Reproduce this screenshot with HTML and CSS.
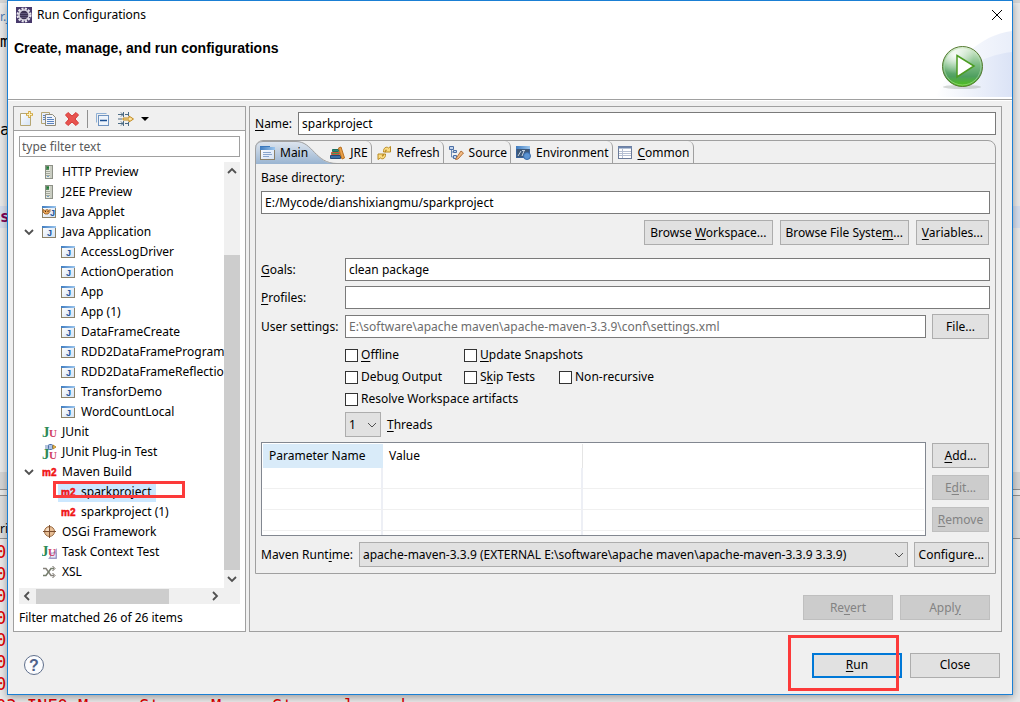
FILE: index.html
```html
<!DOCTYPE html>
<html lang="en">
<head>
	<meta charset="utf-8">
	<title>Run Configurations</title>
	<link rel="stylesheet" href="styles.css">
</head>
<body>

<!-- shared icons -->
<svg class="defs" aria-hidden="true">
	<defs>
		<linearGradient id="g-bar" x1="0" y1="0" x2="1" y2="0"><stop offset="0" stop-color="#3f7cc0"/><stop offset="1" stop-color="#9cc6ee"/></linearGradient>
		<linearGradient id="g-page" x1="0" y1="0" x2="1" y2="1"><stop offset="0" stop-color="#ffffff"/><stop offset="1" stop-color="#d3e2f5"/></linearGradient>
		<linearGradient id="g-tab" x1="0" y1="0" x2="0" y2="1"><stop offset="0" stop-color="#dfe6ef"/><stop offset="1" stop-color="#99b4d1"/></linearGradient>
		<symbol id="i-java" viewBox="0 0 16 16">
			<rect x=".5" y="2.5" width="13" height="11" fill="url(#g-page)" stroke="#8b8168"/>
			<rect x="0" y="2" width="14" height="2" fill="url(#g-bar)"/>
			<text x="5" y="12" class="ico-j">J</text>
		</symbol>
		<symbol id="i-applet" viewBox="0 0 16 16">
			<rect x=".5" y="2.5" width="13" height="11" fill="url(#g-page)" stroke="#8b8168"/>
			<rect x="0" y="2" width="14" height="2" fill="url(#g-bar)"/>
			<path d="M1 5.500l2 1 2-1 2 1 1-1v2l-2 2.500H3L1 8z" fill="#e9a75c" stroke="#94591f" stroke-width=".8"/>
			<path d="M3 7.500h1M5.500 7.500h1" stroke="#4b2b0d"/>
			<text x="8" y="12" class="ico-j">J</text>
		</symbol>
		<symbol id="i-server" viewBox="0 0 16 16">
			<rect x="3.500" y="1.500" width="7" height="13" fill="#e3e5dc" stroke="#8d9187"/>
			<rect x="4" y="2" width="3" height="4" fill="#5a8f62"/><rect x="5" y="3" width="2" height="1.500" fill="#1d7a34"/>
			<path d="M4 7.500h6M4 9.500h6M4 11.500h6" stroke="#a3a89b"/><path d="M9 2v12" stroke="#c9cdc2" stroke-width="2"/>
			<path d="M5 12.500h2" stroke="#76a4c9"/>
		</symbol>
		<symbol id="i-junit" viewBox="0 0 16 16">
			<text x="0" y="13" class="ico-ju ico-green">J</text><text x="7" y="13" class="ico-u ico-rose">U</text>
		</symbol>
		<symbol id="i-junitplug" viewBox="0 0 16 16">
			<text x="0" y="15" class="ico-ju ico-green">J</text><text x="7" y="15" class="ico-u ico-rose">U</text>
			<path d="M3 2h4M3 4h4" stroke="#6485b8"/><rect x="6.500" y=".5" width="4" height="5" rx="1" fill="#a8c2e8" stroke="#4f70a8"/>
			<path d="M11 1l3 2-3 2z" fill="#f5c95d" stroke="#a97716" stroke-width=".8"/>
		</symbol>
		<symbol id="i-task" viewBox="0 0 16 16">
			<path d="M15 4v11H6z" fill="#a9a7cf"/><path d="M9 9h5v5H8z" fill="#e9e8f7" stroke="#8886b8" stroke-width=".7"/>
			<text x="-1" y="12" class="ico-ju ico-green">J</text><text x="6" y="12" class="ico-u ico-rose">U</text>
		</symbol>
		<symbol id="i-m2" viewBox="0 0 16 16"><text x="0" y="12" class="ico-m2">m2</text></symbol>
		<symbol id="i-osgi" viewBox="0 0 16 16">
			<circle cx="7.500" cy="7.500" r="5" fill="#e6bd94" stroke="#9a6c45"/><circle cx="6" cy="6" r="2" fill="#f4dcc4"/>
			<path d="M7.500 1v13M1 7.500h13" stroke="#7c4f2f"/>
		</symbol>
		<symbol id="i-xsl" viewBox="0 0 16 16">
			<path d="M1 4.500h3l5 7h3" fill="none" stroke="#85817a" stroke-width="1.500"/><path d="M1 11.500h3l5-7h3" fill="none" stroke="#747d6c" stroke-width="1.500"/>
			<path d="M10.500 2l2.500 2.500L10.500 7M10.500 9l2.500 2.500-2.500 2.500" fill="none" stroke="#69645b"/>
		</symbol>
		<symbol id="i-down" viewBox="0 0 10 10"><path d="M1 3l4 4 4-4" fill="none" stroke="#505050" stroke-width="1.800"/></symbol>
		<symbol id="i-thin" viewBox="0 0 10 10"><path d="M1 3l4 4 4-4" fill="none" stroke="#505050"/></symbol>
	</defs>
</svg>

<div class="backdrop" aria-hidden="true">
	<span class="back-file">r.j</span>
	<span class="back-code line-m">m</span>
	<span class="back-code line-a">a</span>
	<span class="back-code line-s">s</span>
	<div class="back-strip"></div>
	<div class="back-tabs">ri</div>
	<pre class="back-log">0
0
0
0
0
0
0
03 INFO MemoryStore: MemoryStore cleared</pre>
</div>

<div class="dialog" role="dialog" aria-labelledby="dlg-title">
	<header class="head">
		<div class="titlebar">
			<svg class="app-icon" viewBox="0 0 16 16">
				<rect width="16" height="16" fill="#47396b"/>
				<circle cx="8" cy="8" r="6" fill="none" stroke="#e8e6ee" stroke-width="3" stroke-dasharray="2 1.140"/>
				<circle cx="8" cy="8" r="5" fill="#3b3150" stroke="#d6d3dd" stroke-width="1.500"/>
				<path d="M4 6.500h8M4 8.500h8M5 10.500h6" stroke="#6f678a" stroke-width=".7"/>
			</svg>
			<span class="title" id="dlg-title">Run Configurations</span>
			<button class="close" type="button" aria-label="Close window">
				<svg viewBox="0 0 12 12"><path d="M1 1l10 10M11 1L1 11" stroke="#000" fill="none"/></svg>
			</button>
		</div>
		<h1>Create, manage, and run configurations</h1>
		<svg class="banner" viewBox="0 0 77 68">
			<defs>
				<linearGradient id="g-sweep" x1="0" y1="0" x2="1" y2="0"><stop offset="0" stop-color="#fff"/><stop offset="1" stop-color="#dbe3f6"/></linearGradient>
				<linearGradient id="g-ball" x1="0" y1="0" x2="0" y2="1"><stop offset="0" stop-color="#e4f2df"/><stop offset=".45" stop-color="#7dbd84"/><stop offset=".75" stop-color="#4f9f60"/><stop offset="1" stop-color="#4fc414"/></linearGradient>
				<radialGradient id="g-shine" cx=".3" cy=".2" r=".5"><stop offset="0" stop-color="#fff" stop-opacity=".9"/><stop offset="1" stop-color="#fff" stop-opacity="0"/></radialGradient>
			</defs>
			<path d="M0 67C20 30 45 5 77 1v66z" fill="url(#g-sweep)" opacity=".6"/>
			<path d="M0 67C25 40 45 26 77 22v45z" fill="url(#g-sweep)"/>
			<ellipse cx="27" cy="57" rx="19" ry="2" fill="#9aa39a" opacity=".4"/>
			<circle cx="27.500" cy="36.500" r="20" fill="url(#g-ball)" stroke="#557a30"/>
			<circle cx="27.500" cy="36.500" r="18.500" fill="url(#g-shine)" stroke="#c3e5b4" stroke-opacity=".5"/>
			<path d="M22 25.500l17 10.500-17 11z" fill="#fff" stroke="#4c9c22" stroke-width="1.500"/>
		</svg>
	</header>

	<main class="panes">
		<section class="side">
			<div class="toolbar" role="toolbar">
				<button type="button" aria-label="New launch configuration">
					<svg viewBox="0 0 16 16"><path d="M2.500 2.500h7l3 3v9h-10z" fill="url(#g-page)" stroke="#b5a674"/><path d="M11.500 0v7M8 3.500h7" stroke="#d1a73f" stroke-width="2.600"/><path d="M11.500 1v5M9 3.500h5" stroke="#fbf0bd"/></svg>
				</button>
				<button type="button" aria-label="Duplicate">
					<svg viewBox="0 0 16 16"><path d="M.5 1.500h8v11h-8z" fill="#e9eef7" stroke="#b5a674"/><path d="M4.500 3.500h7l3 3v8h-10z" fill="#f1f5fc" stroke="#8f8a78"/><path d="M6 6.500h5M6 8.500h7M6 10.500h7M6 12.500h7M2 4.500h2M2 6.500h2M2 8.500h2" stroke="#5b83bd"/></svg>
				</button>
				<button type="button" aria-label="Delete">
					<svg viewBox="0 0 16 16"><path d="M4 1.500l4 3.500 4-3.500 2.500 2.500L11 8l3.500 4-2.500 2.500-4-3.500-4 3.500L1.500 12 5 8 1.500 4z" fill="#e8534f" stroke="#d63a37"/></svg>
				</button>
				<i class="sep"></i>
				<button type="button" aria-label="Collapse all">
					<svg viewBox="0 0 16 16"><path d="M1.500 11.500v-9h10" fill="none" stroke="#8fb0d5"/><rect x="3.500" y="4.500" width="10" height="10" fill="#eef4fb" stroke="#6f93c0"/><path d="M5 9.500h7" stroke="#1a4f92" stroke-width="1.500"/></svg>
				</button>
				<button type="button" class="filter-btn" aria-label="Filter">
					<svg viewBox="0 0 16 16"><path d="M0 3.500h5M0 8h4M0 12.500h5M10 3.500h-3M10 12.500h-3M5.500 1v5M10.500 1v4M5.500 10v5M10.500 11v4M3 1.500l2 2-2 2M3 10.500l2 2-2 2" stroke="#4c6b84" fill="none"/><path d="M5 7h6V5l4.500 3-4.500 3V9H5z" fill="#fbe3a1" stroke="#c1881c"/></svg>
					<svg class="drop" viewBox="0 0 8 4"><path d="M0 0h8L4 4z" fill="#000"/></svg>
				</button>
			</div>
			<div class="side-body">
				<input class="filter" type="text" placeholder="type filter text" aria-label="Filter text">
				<div class="tree-box">
					<ul class="tree">
						<li><svg><use href="#i-server"/></svg><span>HTTP Preview</span></li>
						<li><svg><use href="#i-server"/></svg><span>J2EE Preview</span></li>
						<li><svg><use href="#i-applet"/></svg><span>Java Applet</span></li>
						<li class="open"><svg class="twisty"><use href="#i-down"/></svg><svg><use href="#i-java"/></svg><span>Java Application</span></li>
						<li class="sub"><svg><use href="#i-java"/></svg><span>AccessLogDriver</span></li>
						<li class="sub"><svg><use href="#i-java"/></svg><span>ActionOperation</span></li>
						<li class="sub"><svg><use href="#i-java"/></svg><span>App</span></li>
						<li class="sub"><svg><use href="#i-java"/></svg><span>App (1)</span></li>
						<li class="sub"><svg><use href="#i-java"/></svg><span>DataFrameCreate</span></li>
						<li class="sub"><svg><use href="#i-java"/></svg><span>RDD2DataFrameProgrammatically</span></li>
						<li class="sub"><svg><use href="#i-java"/></svg><span>RDD2DataFrameReflection</span></li>
						<li class="sub"><svg><use href="#i-java"/></svg><span>TransforDemo</span></li>
						<li class="sub"><svg><use href="#i-java"/></svg><span>WordCountLocal</span></li>
						<li><svg><use href="#i-junit"/></svg><span>JUnit</span></li>
						<li><svg><use href="#i-junitplug"/></svg><span>JUnit Plug-in Test</span></li>
						<li class="open"><svg class="twisty"><use href="#i-down"/></svg><svg><use href="#i-m2"/></svg><span>Maven Build</span></li>
						<li class="sub selected"><div class="pick"><svg><use href="#i-m2"/></svg><span>sparkproject</span></div><i class="mark mark-item"></i></li>
						<li class="sub"><svg><use href="#i-m2"/></svg><span>sparkproject (1)</span></li>
						<li><svg><use href="#i-osgi"/></svg><span>OSGi Framework</span></li>
						<li><svg><use href="#i-task"/></svg><span>Task Context Test</span></li>
						<li><svg><use href="#i-xsl"/></svg><span>XSL</span></li>
					</ul>
					<div class="vbar">
						<svg class="up"><use href="#i-down"/></svg>
						<div class="track"><div class="thumb"></div></div>
						<svg><use href="#i-down"/></svg>
					</div>
				</div>
				<div class="hbar">
					<svg class="left"><use href="#i-down"/></svg>
					<div class="track"><div class="thumb"></div></div>
					<svg class="right"><use href="#i-down"/></svg>
				</div>
				<p class="status">Filter matched 26 of 26 items</p>
			</div>
		</section>

		<form class="config">
			<div class="row name-row">
				<label for="name"><u>N</u>ame:</label>
				<input type="text" id="name" value="sparkproject">
			</div>

			<div class="folder">
				<div class="tabs" role="tablist">
					<button type="button" role="tab" class="tab active" aria-selected="true">
						<svg class="tab-shape" viewBox="0 0 82 23"><path d="M0 23V8Q0 0 8 0H41C58 0 60 23 82 23z" fill="url(#g-tab)"/><path d="M.5 23V8Q.5 .5 8 .5H41C58 .5 60 22.500 82 22.500" fill="none" stroke="#a0a0a0"/></svg>
						<svg viewBox="0 0 15 16"><rect x=".5" y="2.500" width="14" height="12" fill="url(#g-page)" stroke="#8b8168"/><path d="M0 1.500h10" stroke="#3a78bd"/><rect x="0" y="2" width="15" height="3" fill="url(#g-bar)"/><path d="M3 7.500h8M3 9.500h9M3 11.500h6" stroke="#8aa6cc"/></svg>
						<span>Main</span>
					</button>
					<button type="button" role="tab" class="tab">
						<svg viewBox="0 0 15 16"><path d="M2.500 4.500h6v2h-6z" fill="#2f8a7a" stroke="#1e6f5f"/><path d="M1.500 7.500h8v2h-8z" fill="#3f9a5a" stroke="#c9553a"/><path d="M.5 10.500h10v3H.5z" fill="#3b6ea5" stroke="#234a78"/><path d="M8.500 3l2.500-1 3.500 11-2.500 1z" fill="#e9a04a" stroke="#b9701e"/></svg>
						<span>JRE</span>
					</button>
					<button type="button" role="tab" class="tab">
						<svg viewBox="0 0 15 16"><path d="M6.500 7c-.5-4 3-6 5-4l2-1.500v5.500h-5.500l1.500-2c-1-.5-1.500.5-1 2z" fill="#fbdc83" stroke="#b98a22"/><path d="M8.500 9c.5 4-3 6-5 4l-2.500 1.500V9h5.500L5 11c1 .5 2-.5 1.500-2z" fill="#fbdc83" stroke="#b98a22"/></svg>
						<span>Refresh</span>
					</button>
					<button type="button" role="tab" class="tab">
						<svg viewBox="0 0 15 16"><path d="M2.500 3v9h3M2.500 7h3" fill="none" stroke="#6b88b5"/><path d="M.5 1.500h4v3h-4zM4.500 5.500h3v2h-3zM4.500 10.500h3v3h-3z" fill="#c4d6ee" stroke="#4c6fa5"/><path d="M7 13.500l5-7.500 2.500 2L9 14l-2.500.5z" fill="#f3bd85" stroke="#b3703a"/></svg>
						<span>Source</span>
					</button>
					<button type="button" role="tab" class="tab">
						<svg viewBox="0 0 15 16"><rect x=".5" y="1.500" width="13" height="11" fill="#3e5878" stroke="#39629c"/><rect x="0" y="1" width="14" height="3" fill="url(#g-bar)"/><path d="M2 11l3-5M6 5.500h3M6 11l2-5" stroke="#c9d6e6"/><circle cx="11" cy="11" r="3.500" fill="#5c94d3" stroke="#386aa8"/></svg>
						<span>Environment</span>
					</button>
					<button type="button" role="tab" class="tab">
						<svg viewBox="0 0 15 16"><rect x=".5" y="1.500" width="13" height="12" fill="#fff" stroke="#6b7b99"/><path d="M0 2.500h14" stroke="#6f86ad" stroke-width="2"/><path d="M4.500 4v9M1 6.500h12M1 8.500h12M1 10.500h12" stroke="#b5bfd2"/></svg>
						<span><u>C</u>ommon</span>
					</button>
				</div>

				<div class="page">
					<label class="base-label" for="base">Base directory:</label>
					<input type="text" id="base" value="E:/Mycode/dianshixiangmu/sparkproject">
					<div class="row browse">
						<button type="button" class="btn">Browse <u>W</u>orkspace...</button>
						<button type="button" class="btn">Browse File Syste<u>m</u>...</button>
						<button type="button" class="btn"><u>V</u>ariables...</button>
					</div>

					<div class="row field">
						<label for="goals"><u>G</u>oals:</label>
						<input type="text" id="goals" value="clean package">
					</div>
					<div class="row field">
						<label for="profiles"><u>P</u>rofiles:</label>
						<input type="text" id="profiles">
					</div>
					<div class="row field with-btn">
						<label for="settings">User settings:</label>
						<input type="text" id="settings" class="dim" value="E:\software\apache maven\apache-maven-3.3.9\conf\settings.xml" readonly>
						<button type="button" class="btn btn-side">File...</button>
					</div>

					<div class="checks">
						<label><input type="checkbox"><span><u>O</u>ffline</span></label>
						<label class="span2"><input type="checkbox"><span><u>U</u>pdate Snapshots</span></label>
						<label><input type="checkbox"><span>Debu<u>g</u> Output</span></label>
						<label><input type="checkbox"><span>S<u>k</u>ip Tests</span></label>
						<label><input type="checkbox"><span>Non-recursive</span></label>
						<label class="wide"><input type="checkbox"><span>Resolve Workspace artifacts</span></label>
					</div>
					<div class="row threads">
						<div class="combo combo-small">
							<select id="threads"><option>1</option></select>
							<svg><use href="#i-thin"/></svg>
						</div>
						<label for="threads"><u>T</u>hreads</label>
					</div>

					<div class="row params">
						<div class="grid">
							<table>
								<colgroup><col class="c-name"><col class="c-value"><col></colgroup>
								<thead><tr><th>Parameter Name</th><th>Value</th><th></th></tr></thead>
								<tbody>
									<tr><td></td><td></td><td></td></tr>
									<tr><td></td><td></td><td></td></tr>
									<tr><td></td><td></td><td></td></tr>
									<tr><td></td><td></td><td></td></tr>
								</tbody>
							</table>
						</div>
						<div class="stack">
							<button type="button" class="btn btn-side"><u>A</u>dd...</button>
							<button type="button" class="btn btn-side" disabled>E<u>d</u>it...</button>
							<button type="button" class="btn btn-side" disabled><u>R</u>emove</button>
						</div>
					</div>

					<div class="row runtime">
						<label for="runtime">Maven Runt<u>i</u>me:</label>
						<div class="combo">
							<select id="runtime"><option>apache-maven-3.3.9 (EXTERNAL E:\software\apache maven\apache-maven-3.3.9 3.3.9)</option></select>
							<svg><use href="#i-thin"/></svg>
						</div>
						<button type="button" class="btn">Configure...</button>
					</div>
				</div>
			</div>

			<div class="row actions">
				<button type="button" class="btn btn-wide" disabled>Re<u>v</u>ert</button>
				<button type="button" class="btn btn-wide" disabled>Appl<u>y</u></button>
			</div>
		</form>
	</main>

	<footer class="foot">
		<button class="help" type="button" aria-label="Help">
			<svg viewBox="0 0 22 22"><circle cx="11" cy="11" r="9.500" fill="#fbfcfe" stroke="#5f6f8c"/><text x="11" y="17" text-anchor="middle">?</text></svg>
		</button>
		<div class="run-wrap">
			<button type="button" class="btn btn-wide default"><u>R</u>un</button>
			<i class="mark mark-run"></i>
		</div>
		<button type="button" class="btn btn-wide">Close</button>
	</footer>
</div>

</body>
</html>
```
FILE: styles.css
```css
* {
	box-sizing: border-box;
}
html, body {
	height: 100%;
	margin: 0;
}
body {
	background: #e9e9e9;
	color: #000;
	font: 12px/20px "Noto Sans", "Open Sans", sans-serif;
	overflow: hidden;
}
button, input, select {
	font: inherit;
	color: inherit;
	margin: 0;
}
button {
	background: none;
	border: 0;
	padding: 0;
}
svg {
	display: block;
	flex: none;
}
u {
	text-underline-offset: 2px;
}
.defs {
	position: absolute;
	width: 0;
	height: 0;
}

/* letters inside icons */
.ico-j { font: bold 9px "Liberation Sans", sans-serif; fill: #22579d; }
.ico-ju { font: bold 15px "Liberation Serif", serif; }
.ico-u { font: bold 11px "Liberation Serif", serif; }
.ico-green { fill: #2d8a57; }
.ico-rose { fill: #cf3f62; }
.ico-m2 { font: bold 10px "Liberation Sans", sans-serif; fill: #f01414; stroke: #f01414; stroke-width: .5px; }

/* editor window behind the dialog */
.backdrop {
	position: absolute;
	inset: 0;
	overflow: hidden;
	border-top: 3px solid #d5d5d5;
}
.back-file, .back-code, .back-strip, .back-tabs, .back-log {
	position: absolute;
	left: 0;
}
.back-file {
	top: 4px;
	color: #4a7ab5;
}
.back-code {
	width: 100%;
	font: 16px/22px "DejaVu Sans Mono", monospace;
}
.line-m { top: 28px; }
.line-a { top: 116px; }
.line-s {
	top: 203px;
	background: #d5deee;
	color: #7f0055;
	font-weight: bold;
}
.back-strip {
	top: 469px;
	width: 100%;
	height: 18px;
	background: #d5d5d5;
	border-bottom: 1px solid #8f8f8f;
}
.back-tabs {
	top: 492px;
	width: 100%;
	height: 44px;
	padding-top: 24px;
	line-height: 18px;
	border: solid #8f8f8f;
	border-width: 1px 0;
	background: #dedede;
}
.back-log {
	top: 538px;
	left: -4px;
	margin: 0;
	color: #e00000;
	font: 17px/22px "DejaVu Sans Mono", monospace;
}

/* dialog */
.dialog {
	position: absolute;
	inset: 0 7px 7px;
	display: flex;
	flex-direction: column;
	background: #f0f0f0;
	border: 1px solid #1a7fd4;
	box-shadow: 0 2px 8px rgba(0, 0, 0, .35);
}
.head {
	position: relative;
	height: 99px;
	background: #fff;
	border-bottom: 1px solid #a0a0a0;
}
.titlebar {
	display: flex;
	align-items: center;
	height: 28px;
	padding: 0 9px 0 8px;
}
.app-icon {
	width: 16px;
	height: 16px;
}
.title {
	flex: 1;
	margin-left: 5px;
}
.close svg {
	width: 12px;
	height: 12px;
}
.head h1 {
	margin: 9px 6px;
	font: bold 14px/20px "Liberation Sans", sans-serif;
}
.banner {
	position: absolute;
	right: 0;
	bottom: 1px;
	width: 77px;
	height: 68px;
}
.panes {
	flex: 1;
	min-height: 0;
	display: flex;
	gap: 3px;
	padding: 5px 10px 0 5px;
	border-top: 1px solid #fff;
}

/* launch configuration tree */
.side {
	width: 233px;
	display: flex;
	flex-direction: column;
	border: 1px solid #a0a0a0;
	background: #fff;
}
.toolbar {
	display: flex;
	align-items: center;
	gap: 7px;
	height: 24px;
	padding-left: 4px;
	background: #f0f0f0;
	border-bottom: 1px solid #a0a0a0;
}
.toolbar svg {
	width: 16px;
	height: 16px;
}
.toolbar .sep {
	width: 1px;
	height: 18px;
	background: #909090;
}
.toolbar .filter-btn {
	display: flex;
	align-items: center;
	gap: 7px;
}
.toolbar svg.drop {
	width: 8px;
	height: 4px;
}
.side-body {
	flex: 1;
	min-height: 0;
	display: flex;
	flex-direction: column;
	padding: 5px 5px 3px;
}
input[type=text] {
	flex: 1;
	min-width: 0;
	width: 100%;
	height: 23px;
	padding: 0 3px;
	border: 1px solid #7a7a7a;
	border-radius: 0;
	background: #fff;
}
input.filter {
	flex: none;
	height: 21px;
	padding: 0 2px;
	border-color: #a0a0a0;
}
.filter::placeholder {
	color: #5a5a5a;
	opacity: 1;
}
.tree-box {
	flex: 1;
	min-height: 0;
	display: flex;
	margin-top: 5px;
}
.tree {
	flex: 1;
	min-width: 0;
	margin: 0;
	padding: 0;
	list-style: none;
	overflow: hidden;
}
.tree li, .pick {
	display: flex;
	align-items: center;
	height: 20px;
	white-space: nowrap;
}
.tree li { padding-left: 23px; }
.tree li.open { padding-left: 5px; }
.tree li.sub { padding-left: 42px; }
.tree svg {
	width: 16px;
	height: 16px;
}
.tree svg.twisty {
	width: 10px;
	height: 10px;
	margin-right: 8px;
}
.tree span {
	padding: 0 4px;
}
.tree .selected {
	position: relative;
}
.pick {
	margin-left: -3px;
	padding-left: 3px;
	background: #cce8ff;
}
.vbar {
	display: flex;
	flex-direction: column;
	align-items: center;
	width: 16px;
	padding: 4px 0;
	background: #f0f0f0;
}
.vbar svg, .hbar svg {
	width: 10px;
	height: 10px;
}
.up { transform: rotate(180deg); }
.left { transform: rotate(90deg); }
.right { transform: rotate(-90deg); }
.vbar .track {
	flex: 1;
	width: 100%;
	display: flex;
	flex-direction: column;
	justify-content: flex-end;
	padding-bottom: 4px;
}
.vbar .thumb {
	height: 80%;
	background: #cdcdcd;
}
.hbar {
	display: flex;
	align-items: center;
	gap: 4px;
	height: 16px;
	padding: 0 20px 0 3px;
	background: #f0f0f0;
}
.hbar .track {
	flex: 1;
}
.hbar .thumb {
	width: 78%;
	height: 15px;
	background: #cdcdcd;
}
.status {
	margin: 4px 0 0;
}

/* configuration form */
.config {
	flex: 1;
	min-width: 0;
	padding: 5px;
	border: 1px solid #a0a0a0;
}
.row {
	display: flex;
	align-items: center;
	gap: 6px;
}
.folder {
	margin-top: 5px;
	border: 1px solid #a0a0a0;
	border-radius: 8px 8px 0 0;
}
.tabs {
	display: flex;
	height: 23px;
	border-bottom: 1px solid #a0a0a0;
}
.tab {
	position: relative;
	display: flex;
	align-items: center;
	gap: 5px;
	padding: 1px 3px 0 5px;
	border-right: 1px solid #a0a0a0;
	border-radius: 0 6px 0 0;
}
.tab svg {
	width: 15px;
	height: 16px;
}
.tab.active {
	border: 0;
	padding-left: 4px;
	padding-right: 17px;
}
.tab.active > * {
	position: relative;
}
.tab.active .tab-shape {
	position: absolute;
	top: 0;
	left: -1px;
	width: 82px;
	height: 23px;
}
.page {
	padding: 4px 5px 6px;
}
.base-label {
	display: block;
	margin-bottom: 3px;
}
.btn {
	height: 25px;
	padding: 0 4px;
	border: 1px solid #adadad;
	background: #e1e1e1;
	white-space: nowrap;
}
.btn:disabled {
	border-color: #bfbfbf;
	background: #cccccc;
	color: #838383;
}
.btn-side {
	width: 57px;
	padding: 0;
}
.btn-wide {
	width: 90px;
}
.browse {
	justify-content: flex-end;
	gap: 7px;
	margin: 6px 1px 13px;
}
.browse .btn {
	padding: 0 5px;
}
.field {
	margin-bottom: 5px;
}
.field label {
	width: 84px;
	margin-right: -6px;
}
.with-btn, .params, .runtime {
	margin-right: 1px;
}
.dim {
	color: #6d6d6d;
}
.checks {
	display: grid;
	grid-template-columns: 119px 95px 1fr;
	grid-auto-rows: 22px;
	padding-left: 84px;
}
.checks label {
	display: flex;
	align-items: center;
	gap: 3px;
	white-space: nowrap;
}
.checks .span2 { grid-column: span 2; }
.checks .wide { grid-column: 1 / -1; }
input[type=checkbox] {
	appearance: none;
	flex: none;
	width: 13px;
	height: 13px;
	border: 1px solid #333;
	background: #fff;
}
.threads {
	margin: 2px 0 5px 84px;
}
.combo {
	position: relative;
	flex: 1;
	min-width: 0;
}
.combo-small {
	flex: none;
	width: 36px;
}
.combo select {
	appearance: none;
	display: block;
	width: 100%;
	height: 25px;
	padding: 0 20px 0 3px;
	border: 1px solid #adadad;
	border-radius: 0;
	background: #e1e1e1;
}
.combo svg {
	position: absolute;
	right: 4px;
	top: 8px;
	width: 10px;
	height: 10px;
	pointer-events: none;
}
.params {
	align-items: stretch;
}
.grid {
	flex: 1;
	height: 94px;
	padding: 1px;
	border: 1px solid #828790;
	background: #fff;
	overflow: hidden;
}
.grid table {
	width: 100%;
	table-layout: fixed;
	border-collapse: separate;
	border-spacing: 0;
}
.c-name { width: 120px; }
.c-value { width: 200px; }
.grid th {
	height: 24px;
	padding: 0 6px;
	font-weight: normal;
	text-align: left;
}
.grid th:first-child {
	background: #d9ebf9;
}
.grid th:nth-child(2) {
	border-right: 1px solid #e5e5e5;
}
.grid td {
	height: 21px;
	padding: 0;
	border-bottom: 1px solid #f0f0f0;
}
.grid td:not(:last-child) {
	border-right: 2px solid #edeff5;
}
.stack {
	display: flex;
	flex-direction: column;
	gap: 7px;
	padding-top: 1px;
}
.runtime {
	margin-top: 6px;
}
.actions {
	justify-content: flex-end;
	gap: 7px;
	margin-top: 21px;
	padding-right: 6px;
}

/* bottom bar */
.foot {
	display: flex;
	align-items: center;
	gap: 8px;
	height: 62px;
	padding: 4px 12px 0 15px;
}
.help {
	margin-right: auto;
}
.help svg {
	width: 22px;
	height: 22px;
}
.help text {
	font: bold 16px "Liberation Sans", sans-serif;
	fill: #50628a;
}
.run-wrap {
	position: relative;
}
.default {
	display: block;
	border: 2px solid #0078d7;
}

/* red marker frames */
.mark {
	position: absolute;
	border: 3px solid #fc3a3a;
	pointer-events: none;
}
.mark-item {
	top: -1px;
	left: 34px;
	width: 132px;
	height: 17px;
}
.mark-run {
	inset: -18px 3px -13px -24px;
}
```
